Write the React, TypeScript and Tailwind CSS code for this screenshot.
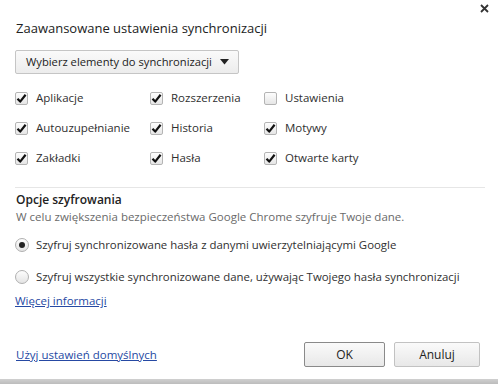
import React, { useState } from "react";

const font = { fontFamily: '"Open Sans", "Noto Sans", sans-serif' };

function Check({ checked, label }: { checked: boolean; label: string }) {
  return (
    <div className="flex h-[30px] items-center">
      <span className="flex h-[13px] w-[13px] items-center justify-center rounded-[2px] border border-[#b4b4b4] bg-gradient-to-b from-[#fdfdfd] to-[#e6e6e6]">
        {checked && (
          <svg width="11" height="11" viewBox="0 0 11 11">
            <path d="M1.5 5.8 L4.2 8.6 L9.6 1.8" fill="none" stroke="#111" strokeWidth="2.2" strokeLinejoin="round" />
          </svg>
        )}
      </span>
      <span className="ml-[8px] whitespace-nowrap text-[11.5px] text-[#303030]">{label}</span>
    </div>
  );
}

function Radio({ checked, label }: { checked: boolean; label: string }) {
  return (
    <div className="flex h-[32px] items-center">
      <span className="flex h-[14px] w-[14px] items-center justify-center rounded-full border border-[#b0b0b0] bg-gradient-to-b from-[#fdfdfd] to-[#e4e4e4]">
        {checked && <span className="h-[6px] w-[6px] rounded-full bg-[#222]" />}
      </span>
      <span className="ml-[7px] whitespace-nowrap text-[11.4px] text-[#303030]">{label}</span>
    </div>
  );
}

export default function App() {
  const [enc, setEnc] = useState(0);
  const items: [string, boolean][] = [
    ["Aplikacje", true],
    ["Rozszerzenia", true],
    ["Ustawienia", false],
    ["Autouzupełnianie", true],
    ["Historia", true],
    ["Motywy", true],
    ["Zakładki", true],
    ["Hasła", true],
    ["Otwarte karty", true],
  ];

  return (
    <div className="flex h-[384px] w-[498px] flex-col bg-white" style={font}>
      <div className="flex h-[18px] justify-end pr-[9px] pt-[4px]">
        <svg width="9" height="9" viewBox="0 0 9 9">
          <path d="M1 1 L8 8 M8 1 L1 8" stroke="#333" strokeWidth="1.8" />
        </svg>
      </div>
      <div className="flex h-[22px] items-center pl-[16px] text-[13px] text-[#222]">
        Zaawansowane ustawienia synchronizacji
      </div>
      <div className="pl-[15px] pt-[10px]">
        <button className="flex h-[24px] w-[224px] items-center justify-between rounded-[2px] border border-[#c5c5c5] bg-gradient-to-b from-[#fafafa] to-[#ececec] pl-[10px] pr-[9px] text-[11.2px] text-[#222]">
          <span className="whitespace-nowrap">Wybierz elementy do synchronizacji</span>
          <svg width="9" height="6" viewBox="0 0 9 6">
            <path d="M0 0 H9 L4.5 5.5 Z" fill="#222" />
          </svg>
        </button>
      </div>
      <div className="grid grid-cols-[135px_114px_1fr] pl-[15px] pt-[9px]">
        {items.map(([l, c]) => (
          <Check key={l} checked={c} label={l} />
        ))}
      </div>
      <div className="mx-[15px] mt-[14px] h-px w-[470px] bg-[#e6e6e6]" />
      <div className="flex h-[21px] items-end pl-[16px] text-[12px] font-semibold text-[#222]">
        Opcje szyfrowania
      </div>
      <div className="flex h-[16px] items-center pl-[16px] text-[11.5px] text-[#6a6a6a]">
        W celu zwiększenia bezpieczeństwa Google Chrome szyfruje Twoje dane.
      </div>
      <div className="flex flex-col pl-[15px] pt-[4px]">
        <div onClick={() => setEnc(0)}>
          <Radio checked={enc === 0} label="Szyfruj synchronizowane hasła z danymi uwierzytelniającymi Google" />
        </div>
        <div onClick={() => setEnc(1)}>
          <Radio checked={enc === 1} label="Szyfruj wszystkie synchronizowane dane, używając Twojego hasła synchronizacji" />
        </div>
      </div>
      <div className="flex h-[16px] items-center pl-[15px] text-[11.5px] text-[#2649a3] underline">
        Więcej informacji
      </div>
      <div className="mt-auto flex items-center justify-between pb-[12px] pl-[16px] pr-[18px]">
        <span className="text-[11.5px] text-[#2649a3] underline">Użyj ustawień domyślnych</span>
        <div className="flex gap-[9px]">
          <button className="h-[25px] w-[81px] rounded-[2px] border border-[#8a8a8a] bg-gradient-to-b from-[#fafafa] to-[#e8e8e8] text-[12px] text-[#222]">
            OK
          </button>
          <button className="h-[25px] w-[86px] rounded-[2px] border border-[#c2c2c2] bg-gradient-to-b from-[#fafafa] to-[#e8e8e8] text-[12px] text-[#222]">
            Anuluj
          </button>
        </div>
      </div>
      <div className="h-[5px] bg-gradient-to-b from-[#d0d0d0] to-[#bcbcbc]" />
    </div>
  );
}
